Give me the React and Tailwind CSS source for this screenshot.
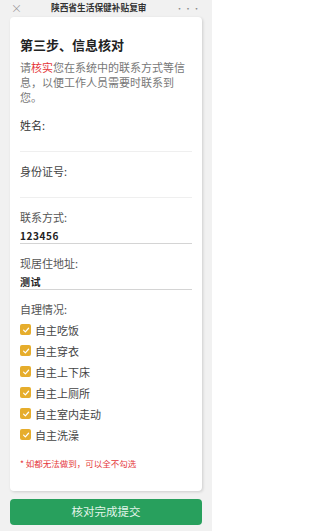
import React from "react";

const font = { fontFamily: '"Noto Sans CJK SC", "Noto Sans", sans-serif' };

function Check({ label }) {
  return (
    <div className="flex items-center h-[21px]">
      <span className="w-[11px] h-[11px] rounded-[2px] bg-[#e6ad2c] flex items-center justify-center shrink-0">
        <svg width="8" height="8" viewBox="0 0 10 10" fill="none">
          <path d="M2 5.2 L4.2 7.3 L8.2 2.8" stroke="#fff" strokeWidth="1.5" strokeLinecap="round" strokeLinejoin="round" />
        </svg>
      </span>
      <span className="ml-[4px] text-[11px] leading-[14px] text-[#444]">{label}</span>
    </div>
  );
}

function Field({ label, value, dark, labelColor }) {
  return (
    <div className="pt-[12px]">
      <div className={`text-[11px] leading-[14px] ${labelColor}`}>{label}</div>
      <div
        className={`h-[20px] flex items-end pb-[1px] border-b ${dark ? "border-[#d4d4d4]" : "border-[#efefef]"} text-[10px] leading-[12px] font-bold tracking-[0.6px] text-[#222]`}
      >
        {value}
      </div>
    </div>
  );
}

export default function App() {
  return (
    <div className="w-[212px] h-[531px] overflow-hidden bg-[#f1f1f1] flex flex-col" style={font}>
      <div className="h-[17px] flex items-center justify-between px-[11px] shrink-0">
        <span className="text-[11px] leading-none text-[#888] font-light">×</span>
        <span className="text-[8.7px] leading-none font-bold text-[#333]">陕西省生活保健补贴复审</span>
        <span className="text-[8px] leading-none text-[#888] tracking-[0.5px]">···</span>
      </div>
      <div className="mx-[10px] bg-white rounded-[4px] shadow-[1px_1px_3px_rgba(0,0,0,0.15)] px-[10px] pt-[19px] pb-[25px] h-[474px] shrink-0">
        <div className="text-[13px] leading-[18px] font-bold text-[#222]">第三步、信息核对</div>
        <p className="mt-[6px] text-[11px] leading-[15px] text-[#777] pr-[2px]">
          请<span className="text-[#e5383b]">核实</span>您在系统中的联系方式等信息，以便工作人员需要时联系到您。
        </p>
        <div className="mt-[1px]">
          <Field label="姓名:" value="" labelColor="text-[#333]" />
          <Field label="身份证号:" value="" labelColor="text-[#444]" />
          <Field label="联系方式:" value="123456" dark labelColor="text-[#555]" />
          <Field label="现居住地址:" value="测试" dark labelColor="text-[#555]" />
        </div>
        <div className="pt-[12px] text-[11px] leading-[14px] text-[#555]">自理情况:</div>
        <div className="mt-[3px] flex flex-col">
          <Check label="自主吃饭" />
          <Check label="自主穿衣" />
          <Check label="自主上下床" />
          <Check label="自主上厕所" />
          <Check label="自主室内走动" />
          <Check label="自主洗澡" />
        </div>
        <div className="mt-[13px] text-[8.5px] leading-[10px] text-[#e5383b]">* 如都无法做到，可以全不勾选</div>
      </div>
      <div className="mx-[10px] mt-[8px] h-[26px] shrink-0 rounded-[4px] bg-[#28a05d] flex items-center justify-center text-[11.5px] text-[#e3f5ea]">
        核对完成提交
      </div>
    </div>
  );
}
